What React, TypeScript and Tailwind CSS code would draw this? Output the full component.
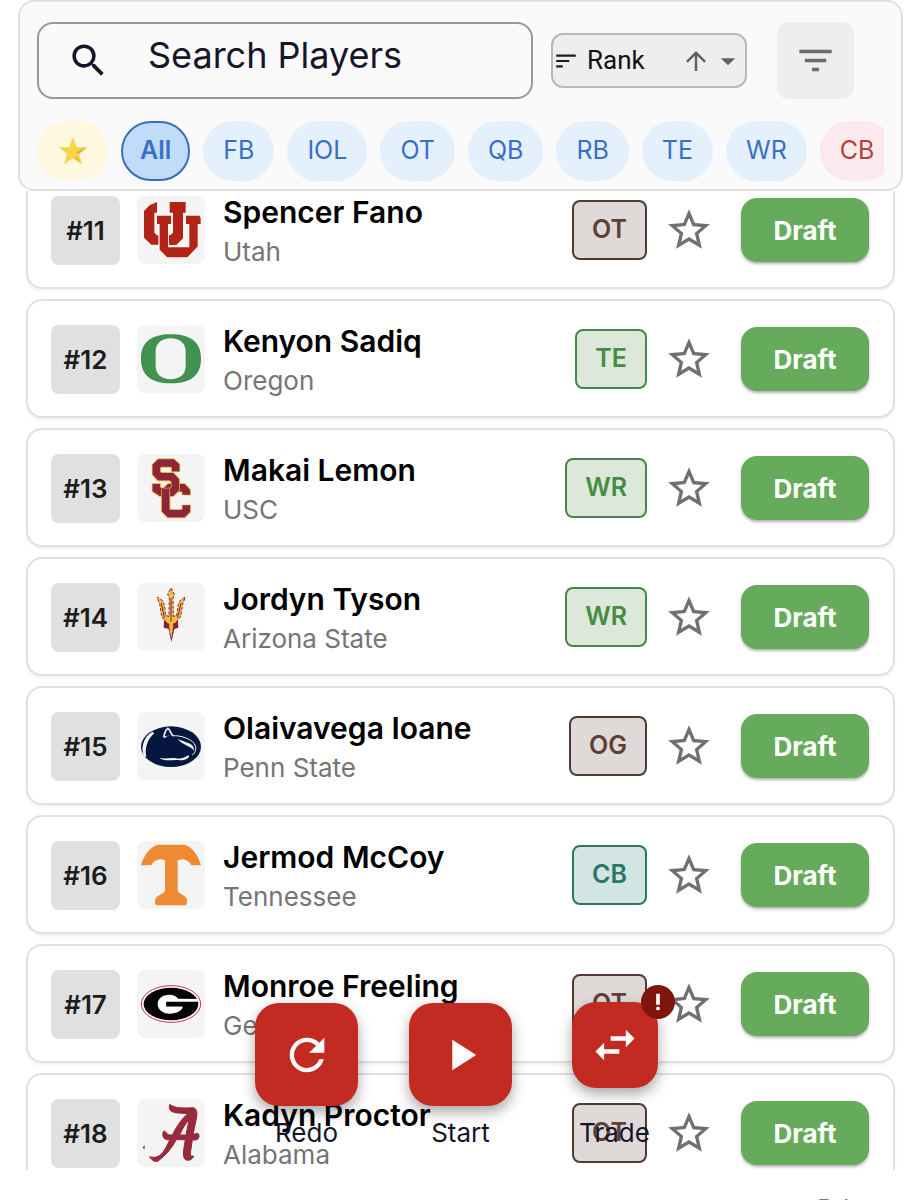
import { useState } from "react";
import {
  MdArrowDropDown,
  MdArrowUpward,
  MdFilterList,
  MdPlayArrow,
  MdPriorityHigh,
  MdRefresh,
  MdSearch,
  MdSort,
  MdStarBorder,
  MdSwapHoriz,
} from "react-icons/md";
import { clsx } from "clsx";

interface Player {
  rank: number;
  name: string;
  school: string;
  position: string;
  logo: React.ReactNode;
}

const UtahLogo = (
  <>
    <path
      d="M60 18L38 28L21 45V125L43 146H118L138 126V50H146V18H98V50H108V110L101 118H60L52 110V50H60Z"
      fill="#b22418"
    />
    <path
      d="M58 57H104V86H95V152H155V86H145V57H188L193 66V86H184V152L152 186H90L66 162V86H58Z"
      fill="#b22418"
      stroke="#f4f4f4"
      strokeWidth="4"
    />
    <path d="M110 50H138V126L118 146H96V118H101L110 110Z" fill="#b22418" />
  </>
);

const OregonLogo = (
  <path
    d="M102 28C160 28 192 50 192 101C192 152 160 175 102 175C44 175 12 152 12 101C12 50 44 28 102 28ZM101 40C74 40 56 56 56 78V124C56 148 74 163 101 163C128 163 146 148 146 124V78C146 56 128 40 101 40Z"
    fill="#41924f"
    fillRule="evenodd"
  />
);

const UscLogo = (
  <g fill="none" strokeLinejoin="miter">
    <path d="M148 124V112L138 101H98L86 113V168L97 179H138L148 169V152" stroke="#e0a030" strokeWidth="27" />
    <path d="M148 122V112L138 101H98L86 113V168L97 179H138L148 169V154" stroke="#8f2638" strokeWidth="22" />
    <path d="M116 54V36L106 27H68L58 37V57L68 68H104L115 80V104L104 115H72L58 106V88" stroke="#e0a030" strokeWidth="27" />
    <path d="M116 52V36L106 27H68L58 37V57L68 68H104L115 80V104L104 115H72L58 106V90" stroke="#8f2638" strokeWidth="22" />
    <path d="M86 106V168" stroke="#e0a030" strokeWidth="27" />
    <path d="M86 104V170" stroke="#8f2638" strokeWidth="22" />
  </g>
);

const ArizonaStateLogo = (
  <>
    <path d="M82 98L122 98L124 134L112 138L103 178L96 138L80 134Z" fill="#84203a" />
    <path
      d="M102 15L112 34L108 46L109 100L119 98L124 64L130 52L145 42L137 64L131 100L118 118L110 122L107 150L103 166L98 150L95 122L87 118L74 100L68 64L60 42L76 52L82 64L86 98L96 100L97 46L92 34Z"
      fill="#f3bb3c"
      stroke="#84203a"
      strokeWidth="3"
      strokeDasharray="9 5"
    />
    <path d="M102 46V116M73 60L82 104M132 60L122 104" stroke="#84203a" strokeWidth="3" fill="none" />
  </>
);

const PennStateLogo = (
  <>
    <ellipse cx="102" cy="104" rx="90" ry="61" fill="#06173f" />
    <path d="M46 59C18 76 10 108 22 136L28 133C22 108 32 80 52 64Z" fill="#f4f4f4" />
    <g fill="none" stroke="#f4f4f4" strokeLinejoin="round" strokeLinecap="round">
      <path d="M80 74C84 64 84 54 92 49C100 52 100 66 108 71" strokeWidth="5" />
      <path d="M108 71C132 70 160 80 172 95C180 108 176 122 166 129" strokeWidth="3" />
    </g>
    <path d="M80 76C86 70 96 68 108 73L94 70L84 78Z" fill="#f4f4f4" />
    <path d="M122 82C134 84 142 90 156 94C168 100 172 106 170 116C162 102 142 102 122 82Z" fill="#f4f4f4" />
    <path d="M67 137C84 143 108 134 124 140C138 140 144 134 156 130C158 138 146 146 128 145C108 141 82 151 67 137Z" fill="#f4f4f4" />
  </>
);

const TennesseeLogo = (
  <path
    d="M12 73C20 42 42 16 62 11H142C164 16 184 42 192 73H163C156 58 138 50 122 58V148C122 160 150 162 150 178V185Q150 193 140 193H64Q54 193 54 185V178C56 162 84 160 84 148V58C68 50 50 58 43 73Z"
    fill="#ed8a33"
  />
);

const GeorgiaLogo = (
  <>
    <ellipse cx="102" cy="102" rx="89" ry="55" fill="#fff" stroke="#c23350" strokeWidth="3" />
    <ellipse cx="102" cy="102" rx="82" ry="49" fill="#050505" />
    <path
      d="M124 86C118 78 108 74 98 74C76 74 62 86 62 102C62 119 77 131 98 131C120 131 136 122 138 108H88V95H186V87Z"
      fill="#fff"
    />
    <path d="M88 97H140V110H88Z" fill="#050505" />
    <path d="M88 110H136C134 114 130 116 126 118L108 112H88Z" fill="#fff" />
  </>
);

const AlabamaLogo = (
  <g fill="#972a3c">
    <path
      d="M99 16C110 28 140 28 170 26C180 30 181 42 179 54L168 108C176 104 184 98 186 110C187 120 178 126 166 122L162 150C158 170 160 172 170 171C166 182 156 186 148 183C136 178 138 160 145 122H118C104 148 86 170 62 187C54 190 44 184 38 173C54 178 66 174 78 160C86 148 92 136 99 121C84 126 72 114 80 96C88 96 88 108 102 108H106C118 82 134 60 152 44C134 42 112 44 101 35C96 30 96 22 99 16ZM156 62C146 74 134 92 128 108H147Z"
      fillRule="evenodd"
      stroke="#972a3c"
      strokeWidth="3"
    />
    <path d="M17 145L24 139L22 152Z" />
  </g>
);

const players: Player[] = [
  { rank: 11, name: "Spencer Fano", school: "Utah", position: "OT", logo: UtahLogo },
  { rank: 12, name: "Kenyon Sadiq", school: "Oregon", position: "TE", logo: OregonLogo },
  { rank: 13, name: "Makai Lemon", school: "USC", position: "WR", logo: UscLogo },
  { rank: 14, name: "Jordyn Tyson", school: "Arizona State", position: "WR", logo: ArizonaStateLogo },
  { rank: 15, name: "Olaivavega Ioane", school: "Penn State", position: "OG", logo: PennStateLogo },
  { rank: 16, name: "Jermod McCoy", school: "Tennessee", position: "CB", logo: TennesseeLogo },
  { rank: 17, name: "Monroe Freeling", school: "Georgia", position: "OT", logo: GeorgiaLogo },
  { rank: 18, name: "Kadyn Proctor", school: "Alabama", position: "OT", logo: AlabamaLogo },
];

const offense = ["FB", "IOL", "OT", "QB", "RB", "TE", "WR"];

const positionColors: Record<string, string> = {
  OT: "border-[#513a34] bg-[#dfd9d7] text-[#5d4037]",
  OG: "border-[#513a34] bg-[#dfd9d7] text-[#5d4037]",
  TE: "border-[#478645] bg-[#dbe8da] text-[#488c43]",
  WR: "border-[#478645] bg-[#dbe8da] text-[#488c43]",
  CB: "border-[#2b7569] bg-[#d2e5e2] text-[#2b7569]",
};

function StarEmoji() {
  return (
    <svg viewBox="0 0 28 28" className="size-[30px]" aria-hidden="true">
      <path d="M14 1l3.4 9.2 9.9.4-7.7 6.1 2.7 9.6L14 20.8l-8.3 5.5 2.7-9.6L.7 10.6l9.9-.4z" fill="#f7d54a" />
      <path d="M27.3 10.6l-7.7 6.1-3.2-1.5z" fill="#e0b03c" />
      <path d="M14 20.8l8.3 5.5-4-7.6z" fill="#ecc344" />
    </svg>
  );
}

function PlayerRow({ player }: { player: Player }) {
  return (
    <li className="flex items-center rounded-2xl border-2 border-[#e0e0e0] bg-white pt-4 pr-6 pb-[15px] pl-[23px] shadow-[0_2px_3px_rgba(0,0,0,0.06)]">
      <span className="flex size-[69px] shrink-0 items-center justify-center rounded-lg bg-[#e0e0e0] text-[26px] font-semibold text-[#1c1c1c]">
        #{player.rank}
      </span>
      <svg viewBox="0 0 204 204" className="ml-[17px] size-[68px] shrink-0 rounded-lg bg-[#f4f4f4]" role="img" aria-label={player.school}>
        {player.logo}
      </svg>
      <div className="ml-[18px] min-w-0 flex-1 pt-1">
        <p className="truncate text-[30px] leading-10 font-semibold text-black">{player.name}</p>
        <p className="truncate text-[26px] leading-10 text-[#757575]">{player.school}</p>
      </div>
      <span
        className={clsx(
          "flex h-[60px] items-center rounded-lg border-2 px-[18px] text-[25px] font-semibold",
          positionColors[player.position]
        )}
      >
        {player.position}
      </span>
      <button type="button" aria-label={`Favorite ${player.name}`} className="ml-[17px] text-[#707070]">
        <MdStarBorder className="size-[50px]" />
      </button>
      <button
        type="button"
        className="ml-[27px] h-16 w-32 shrink-0 rounded-2xl bg-[#66ab5b] text-[26px] font-bold text-white shadow-[0_2px_3px_rgba(0,0,0,0.3)]"
      >
        Draft
      </button>
    </li>
  );
}

export default function App() {
  const [query, setQuery] = useState("");

  return (
    <div className="relative flex h-screen flex-col overflow-hidden bg-white font-[Inter,sans-serif]">
      {/* Search and filters */}
      <header className="z-10 mx-[18px] shrink-0 rounded-2xl border-2 border-[#e0e0e0] bg-[#fafafa] px-[17px] pt-5 pb-2">
        <div className="flex items-center">
          <label className="flex h-[77px] min-w-0 flex-1 items-center rounded-2xl border-2 border-[#999] pl-7">
            <MdSearch className="size-[43px] shrink-0 text-[#15152b]" />
            <input
              type="text"
              value={query}
              onChange={(e) => setQuery(e.target.value)}
              placeholder="Search Players"
              aria-label="Search Players"
              className="ml-[38px] w-full min-w-0 pb-3 text-[36px] outline-none placeholder:text-[#15152b]"
            />
          </label>
          <div className="ml-[18px] flex h-[55px] w-[196px] shrink-0 items-center rounded-xl border-2 border-[#b8b8b8] bg-[#eee]">
            <MdSort className="size-[26px] shrink-0 text-[#1c1c1c]" />
            <select
              aria-label="Sort by"
              className="ml-2 min-w-0 flex-1 appearance-none font-[Roboto,sans-serif] text-[26px] text-[#111]"
            >
              <option>Rank</option>
              <option>Name</option>
              <option>School</option>
            </select>
            <MdArrowUpward className="size-[30px] shrink-0 text-[#616161]" />
            <MdArrowDropDown className="size-[34px] shrink-0 text-[#616161]" />
          </div>
          <button
            type="button"
            aria-label="Filters"
            className="mr-[30px] ml-[30px] flex size-[77px] shrink-0 items-center justify-center rounded-xl bg-[#eee] text-[#6b6b6b]"
          >
            <MdFilterList className="size-[43px]" />
          </button>
        </div>

        <div className="mt-[22px] flex gap-[13px] overflow-hidden text-[25px]">
          <button
            type="button"
            aria-label="Favorites"
            className="flex h-[60px] w-[71px] shrink-0 items-center justify-center rounded-full bg-[#fef8e1]"
          >
            <StarEmoji />
          </button>
          <button
            type="button"
            className="h-[60px] shrink-0 rounded-full border-2 border-[#3a6cbd] bg-[#c0dcf9] px-[17px] font-semibold text-[#3a6fc6]"
          >
            All
          </button>
          {offense.map((position) => (
            <button
              key={position}
              type="button"
              className="h-[60px] shrink-0 rounded-full bg-[#e4f1fc] px-5 text-[#3a6fc6]"
            >
              {position}
            </button>
          ))}
          <button type="button" className="h-[60px] shrink-0 rounded-full bg-[#fce9ed] px-5 text-[#b8403c]">
            CB
          </button>
        </div>
      </header>

      {/* Player list */}
      <main className="min-h-0 flex-1 overflow-hidden px-[26px]">
        <ul className="-mt-[21px] flex flex-col gap-[10px]">
          {players.map((player) => (
            <PlayerRow key={player.rank} player={player} />
          ))}
        </ul>
      </main>

      <footer className="h-[30px] shrink-0 overflow-hidden pt-[23px] pr-4 text-right">
        <a href="#privacy" className="text-[25px] leading-8 text-[#757575]">
          Privacy
        </a>
      </footer>

      {/* Floating draft controls */}
      <div className="absolute inset-x-0 bottom-[47px] z-20 flex items-end justify-center gap-[51px] text-[26px] text-[#15152b]">
        <div className="flex w-[103px] flex-col items-center gap-[7px]">
          <button
            type="button"
            aria-labelledby="redo-label"
            className="flex size-[103px] items-center justify-center rounded-3xl bg-[#c32a21] text-white shadow-[0_6px_14px_rgba(0,0,0,0.35)]"
          >
            <MdRefresh className="size-[52px]" />
          </button>
          <span id="redo-label" className="leading-10">Redo</span>
        </div>
        <div className="flex w-[103px] flex-col items-center gap-[7px]">
          <button
            type="button"
            aria-labelledby="start-label"
            className="flex size-[103px] items-center justify-center rounded-3xl bg-[#c32a21] text-white shadow-[0_6px_14px_rgba(0,0,0,0.35)]"
          >
            <MdPlayArrow className="size-[52px]" />
          </button>
          <span id="start-label" className="leading-10">Start</span>
        </div>
        <div className="flex w-[103px] flex-col items-center gap-[25px]">
          <button
            type="button"
            aria-labelledby="trade-label"
            className="relative flex size-[86px] items-center justify-center rounded-3xl bg-[#c32a21] text-white shadow-[0_6px_14px_rgba(0,0,0,0.35)]"
          >
            <MdSwapHoriz className="size-[52px]" />
            <span className="absolute -top-[17px] -right-[17px] flex size-[34px] items-center justify-center rounded-full bg-[#80150e]">
              <MdPriorityHigh className="size-[22px]" />
            </span>
          </button>
          <span id="trade-label" className="leading-10">Trade</span>
        </div>
      </div>
    </div>
  );
}
